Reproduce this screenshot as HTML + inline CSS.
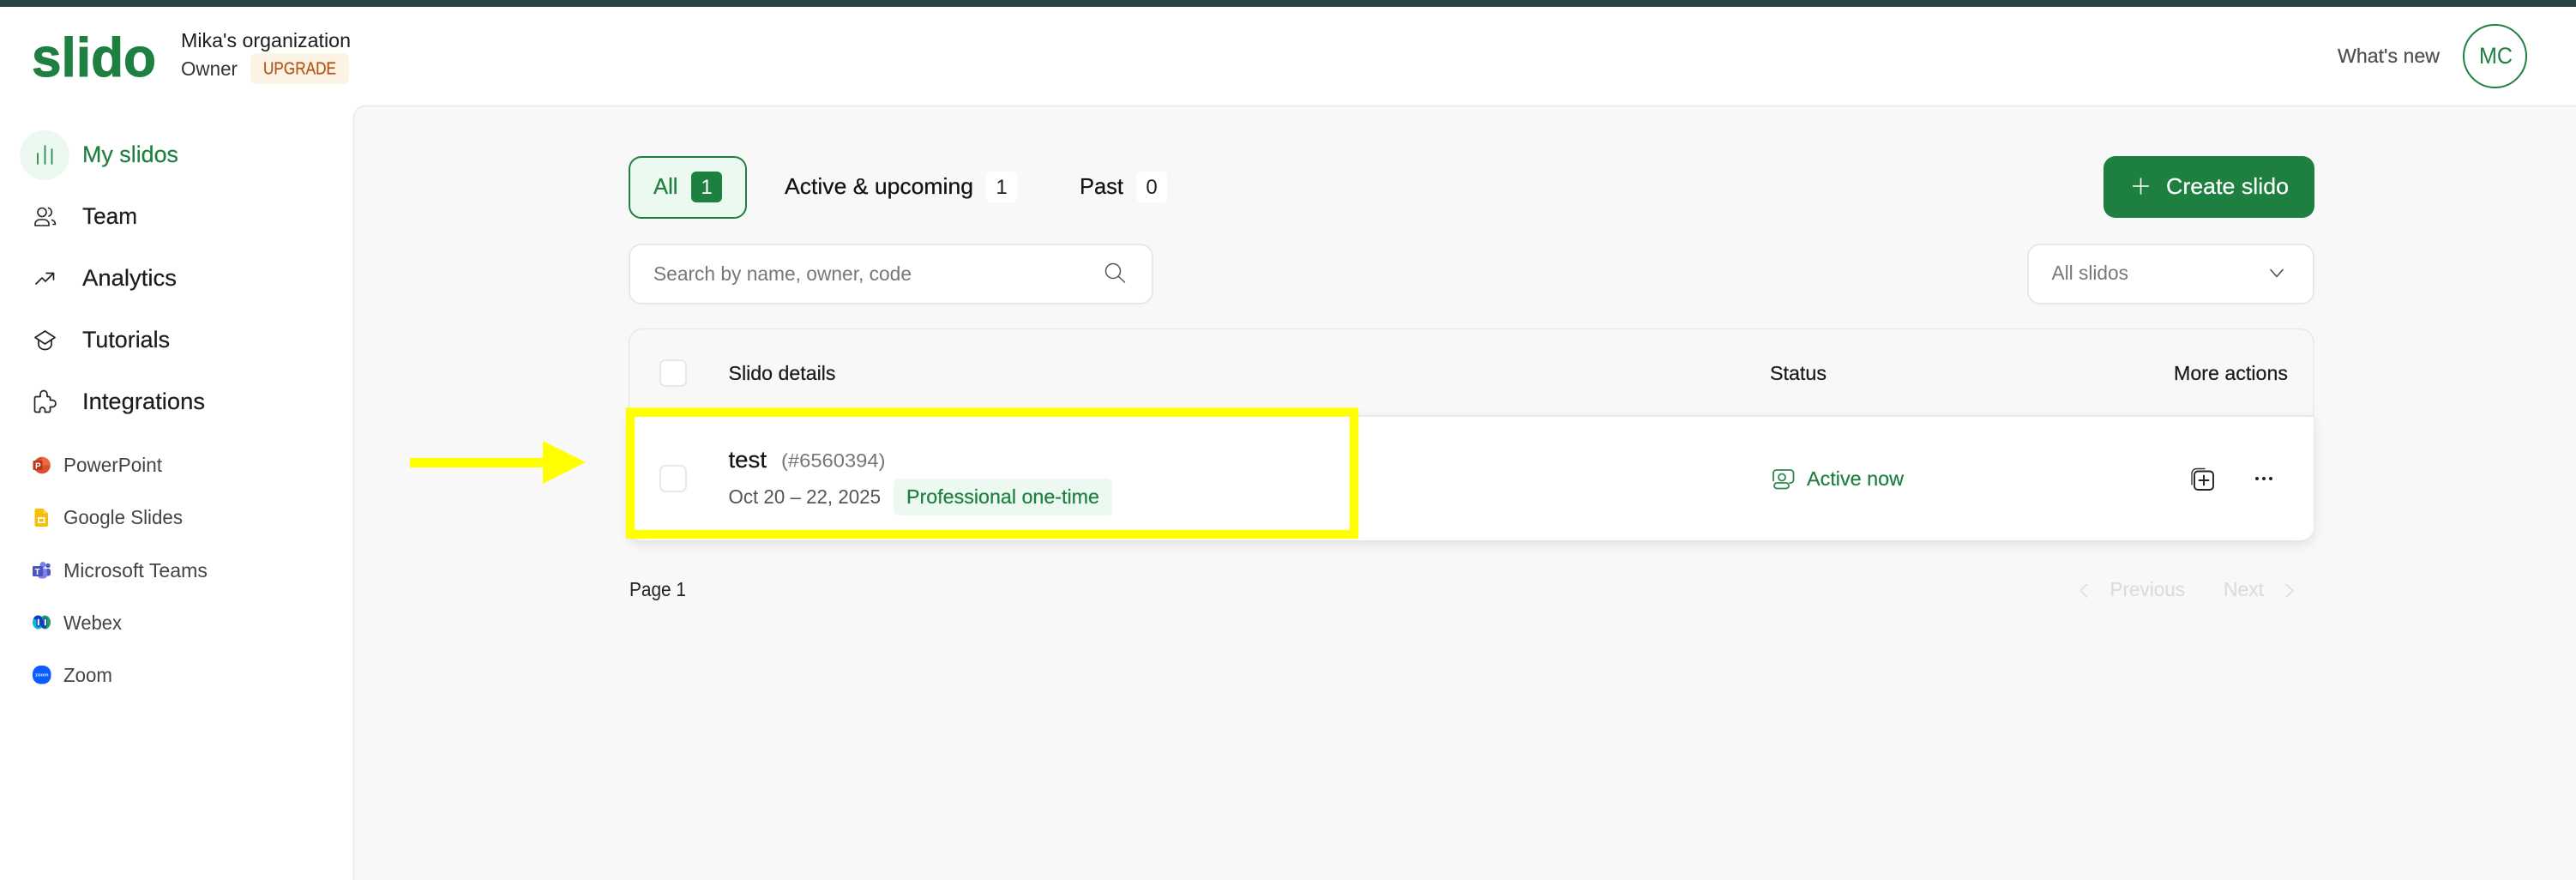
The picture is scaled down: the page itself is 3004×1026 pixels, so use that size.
<!DOCTYPE html>
<html lang="en">
<head>
<meta charset="utf-8">
<title>Slido</title>
<style>
html,body{margin:0;padding:0;background:#fff;width:3004px;height:1026px;overflow:hidden}
svg{display:block}
text{font-family:"Liberation Sans",sans-serif;fill:currentColor}
.m{stroke:currentColor;stroke-width:.22}
.i{fill:none;stroke-linecap:round;stroke-linejoin:round}
</style>
</head>
<body>
<svg xmlns="http://www.w3.org/2000/svg" width="3004" height="1026" viewBox="0 0 3004 1026">
<defs>
<filter id="sh" x="-5%" y="-20%" width="110%" height="150%"><feDropShadow dx="0" dy="4" stdDeviation="6" flood-color="#000" flood-opacity=".11"/></filter>
<clipPath id="pg"><rect x="0" y="0" width="3004" height="1026"/></clipPath>
</defs>
<g clip-path="url(#pg)">
<rect x="0" y="0" width="3004" height="8" fill="#2a4441"/>

<!-- main panel -->
<path d="M3004 123.500H426A14 14 0 0 0 412.500 137.500V1026H3004Z" fill="#f8f8f8"/>
<path d="M3004 123.500H426A14 14 0 0 0 412.500 137.500V1026" fill="none" stroke="#ececec" stroke-width="2"/>

<!-- header -->
<text x="37" y="89" font-size="64" font-weight="700" color="#1e8040" stroke="#1e8040" stroke-width="1" textLength="145" lengthAdjust="spacingAndGlyphs">slido</text>
<text x="211" y="55" font-size="23.500" color="#1c1c1c" textLength="198" lengthAdjust="spacingAndGlyphs">Mika's organization</text>
<text x="211" y="88" font-size="23.500" color="#333" textLength="66" lengthAdjust="spacingAndGlyphs">Owner</text>
<rect x="292" y="62" width="115" height="36" rx="7" fill="#fdf3e4"/>
<text class="m" x="307" y="86.500" font-size="20" color="#b0561a" textLength="85" lengthAdjust="spacingAndGlyphs">UPGRADE</text>
<text x="2726" y="73" font-size="23.500" color="#505050" class="m" textLength="119" lengthAdjust="spacingAndGlyphs">What's new</text>
<circle cx="2909.500" cy="65.500" r="36.500" fill="#fff" stroke="#1e8040" stroke-width="2"/>
<text x="2891" y="74" font-size="27" color="#1e8040" textLength="39" lengthAdjust="spacingAndGlyphs">MC</text>

<!-- nav -->
<circle cx="52" cy="181" r="29" fill="#ecf9f1"/>
<g class="i" stroke="#2a8a4c" stroke-width="1.800"><path d="M44 179V191M52.500 170V191M60.500 174V191"/></g>
<text class="m" x="96" y="189" font-size="27" color="#1e8040" textLength="112" lengthAdjust="spacingAndGlyphs">My slidos</text>

<g class="i" stroke="#222" stroke-width="1.600">
<circle cx="49" cy="247.500" r="5"/>
<path d="M41 263V260.500A5.500 5.500 0 0 1 46.500 256H51.500A5.500 5.500 0 0 1 57 260.500V263Z"/>
<path d="M56.500 242.500A5 5 0 0 1 57 252"/>
<path d="M60.500 256.500A5 5 0 0 1 64.500 261.500H62"/>
</g>
<text class="m" x="96" y="261" font-size="27" color="#1c1c1c" textLength="64" lengthAdjust="spacingAndGlyphs">Team</text>

<g class="i" stroke="#222" stroke-width="1.700"><path d="M42 331L49 324L53 328L62 319M54 318.500H62.500V326"/></g>
<text class="m" x="96" y="333" font-size="27" color="#1c1c1c" textLength="110" lengthAdjust="spacingAndGlyphs">Analytics</text>

<g class="i" stroke="#222" stroke-width="1.700"><path d="M52.500 386L64 393.500L52.500 401L41 393.500Z"/><path d="M45 396.500V401.500A7.500 6 0 0 0 60 401.500V396.500"/></g>
<text class="m" x="96" y="405" font-size="27" color="#1c1c1c" textLength="102" lengthAdjust="spacingAndGlyphs">Tutorials</text>

<g class="i" stroke="#222" stroke-width="1.700"><path d="M40.500 464V479A1.500 1.500 0 0 0 42 480.500H46.500V478A3 3 0 0 1 52.500 478V480.500H57A1.500 1.500 0 0 0 58.500 479V474.500H61A4 4 0 0 0 61 466.500H58.500V464A1.500 1.500 0 0 0 57 462.500H55V459.500A4 4 0 0 0 47 459.500V462.500H42A1.500 1.500 0 0 0 40.500 464Z"/></g>
<text class="m" x="96" y="477" font-size="27" color="#1c1c1c" textLength="143" lengthAdjust="spacingAndGlyphs">Integrations</text>

<!-- integrations -->
<circle cx="49" cy="542.500" r="9.800" fill="#d9502b"/>
<path d="M49 532.700A9.800 9.800 0 0 1 58.800 542.500H49Z" fill="#f0693c"/>
<rect x="38.500" y="537" width="11" height="11" rx="1.200" fill="#b5361a"/>
<text x="41" y="546.500" font-size="10" font-weight="700" style="fill:#fff">P</text>
<text x="74" y="550" font-size="23" color="#444" textLength="115" lengthAdjust="spacingAndGlyphs">PowerPoint</text>

<path d="M42.500 593H50.500L56 598.500V612A2 2 0 0 1 54 614H42.500A2 2 0 0 1 40.500 612V595A2 2 0 0 1 42.500 593Z" fill="#fbbc04"/>
<path d="M50.500 593V598.500H56Z" fill="#fdd663"/>
<path fill-rule="evenodd" d="M44 603H52.500V610H44ZM45.800 604.800V608.200H50.700V604.800Z" fill="#fff"/>
<text x="74" y="611" font-size="23" color="#444" textLength="139" lengthAdjust="spacingAndGlyphs">Google Slides</text>

<circle cx="56" cy="659.500" r="2.700" fill="#5059c9"/>
<rect x="53" y="663" width="6" height="8.500" rx="2.500" fill="#5059c9"/>
<circle cx="50" cy="658.500" r="3.500" fill="#7b83eb"/>
<rect x="44" y="662.500" width="11" height="12" rx="4" fill="#7b83eb"/>
<rect x="38" y="660" width="12" height="12" rx="1.200" fill="#4b53bc"/>
<text x="40.500" y="670" font-size="10" font-weight="700" style="fill:#fff">T</text>
<text x="74" y="673" font-size="23" color="#444" textLength="168" lengthAdjust="spacingAndGlyphs">Microsoft Teams</text>

<ellipse cx="44.500" cy="725.500" rx="6.500" ry="8" fill="#0bb5d8"/>
<ellipse cx="52.500" cy="725.500" rx="6.500" ry="8" fill="#1fa55a"/>
<path d="M39 722C40 717 46 716 49 720V727C47 724 42 722 39 722Z" fill="#0a3dc8"/>
<path d="M49 720C50 724 51 731 55 731C51 734 47 731 47 727Z" fill="#0a3dc8"/>
<rect x="42.500" y="720" width="4.500" height="11" rx="2.200" fill="#0a3dc8"/>
<rect x="50.500" y="720" width="4.500" height="11" rx="2.200" fill="#0a3dc8"/>
<rect x="43.800" y="721.500" width="2" height="8" rx="1" fill="#fff"/>
<rect x="51.800" y="721.500" width="2" height="8" rx="1" fill="#fff"/>
<text x="74" y="734" font-size="23" color="#444" textLength="68" lengthAdjust="spacingAndGlyphs">Webex</text>

<rect x="38" y="776" width="21.500" height="21.500" rx="9.500" fill="#0b5cff"/>
<text x="41" y="788.500" font-size="5.500" font-weight="700" style="fill:#dfe9ff" textLength="15.500" lengthAdjust="spacingAndGlyphs">zoom</text>
<text x="74" y="795" font-size="23" color="#444" textLength="57" lengthAdjust="spacingAndGlyphs">Zoom</text>

<!-- tabs -->
<rect x="734" y="183" width="136" height="71" rx="14" fill="#ecf9f1" stroke="#1e8040" stroke-width="2"/>
<text class="m" x="762" y="226" font-size="26" color="#1e8040" textLength="28.500" lengthAdjust="spacingAndGlyphs">All</text>
<rect x="806" y="200" width="36" height="36" rx="6" fill="#1e8040"/>
<text x="824" y="226" font-size="24" text-anchor="middle" style="fill:#fff">1</text>

<text class="m" x="915" y="226" font-size="26" color="#111" textLength="220" lengthAdjust="spacingAndGlyphs">Active &amp; upcoming</text>
<rect x="1150" y="200" width="36" height="36" rx="6" fill="#fff"/>
<text x="1168" y="226" font-size="24" text-anchor="middle" color="#222">1</text>
<text class="m" x="1259" y="226" font-size="26" color="#111" textLength="51" lengthAdjust="spacingAndGlyphs">Past</text>
<rect x="1325" y="200" width="36" height="36" rx="6" fill="#fff"/>
<text x="1343" y="226" font-size="24" text-anchor="middle" color="#222">0</text>

<!-- create -->
<rect x="2453" y="182" width="246" height="72" rx="14" fill="#1e8040"/>
<path d="M2487 217H2506M2496.500 207.500V226.500" stroke="#fff" stroke-width="1.600" fill="none"/>
<text class="m" x="2526" y="226" font-size="26" color="#fff" textLength="143" lengthAdjust="spacingAndGlyphs">Create slido</text>

<!-- search -->
<rect x="734" y="285" width="610" height="69" rx="14" fill="#fff" stroke="#e8e8e8" stroke-width="2"/>
<text x="762" y="327" font-size="23" color="#777" textLength="301" lengthAdjust="spacingAndGlyphs">Search by name, owner, code</text>
<g class="i" stroke="#555" stroke-width="1.500"><circle cx="1298" cy="316" r="8.500"/><path d="M1304.500 322.500L1311.500 329"/></g>

<!-- select -->
<rect x="2365" y="285" width="333" height="69" rx="14" fill="#fff" stroke="#e8e8e8" stroke-width="2"/>
<text x="2392.500" y="326" font-size="23" color="#777" textLength="89.500" lengthAdjust="spacingAndGlyphs">All slidos</text>
<path class="i" d="M2648 314.500L2655 322.500L2662 314.500" stroke="#555" stroke-width="1.700"/>

<!-- table -->
<rect x="733.500" y="383.500" width="1964.500" height="120" rx="16" fill="#f8f8f8" stroke="#e8e8e8" stroke-width="1.500"/>
<path d="M733 485H2698V614A16 16 0 0 1 2682 630H749A16 16 0 0 1 733 614Z" fill="#fff" filter="url(#sh)"/>
<path d="M733 485H2698" stroke="#e8e8e8" stroke-width="2"/>

<rect x="770" y="420" width="30" height="30" rx="6" fill="#fff" stroke="#e8e8e8" stroke-width="2"/>
<text class="m" x="849.500" y="443" font-size="23" color="#1a1a1a" textLength="125" lengthAdjust="spacingAndGlyphs">Slido details</text>
<text class="m" x="2064" y="443" font-size="23" color="#1a1a1a" textLength="66" lengthAdjust="spacingAndGlyphs">Status</text>
<text class="m" x="2535" y="443" font-size="23" color="#1a1a1a" textLength="133" lengthAdjust="spacingAndGlyphs">More actions</text>

<!-- row -->
<rect x="770" y="543" width="30" height="30" rx="6" fill="#fff" stroke="#e8e8e8" stroke-width="2"/>
<text class="m" x="849.500" y="545" font-size="27" color="#111" textLength="44.500" lengthAdjust="spacingAndGlyphs">test</text>
<text x="911" y="544.500" font-size="22.500" color="#777" textLength="121.500" lengthAdjust="spacingAndGlyphs">(#6560394)</text>
<text x="849.500" y="587" font-size="23" color="#555" textLength="177.500" lengthAdjust="spacingAndGlyphs">Oct 20 – 22, 2025</text>
<rect x="1042" y="558" width="255" height="43" rx="6" fill="#ecf9f1"/>
<text class="m" x="1057" y="587" font-size="23" color="#1e8040" textLength="225" lengthAdjust="spacingAndGlyphs">Professional one-time</text>

<g class="i" stroke="#2a8a4c" stroke-width="1.800">
<path d="M2068 560.500V551.500A3.500 3.500 0 0 1 2071.500 548H2088A3.500 3.500 0 0 1 2091.500 551.500V559.500A3.500 3.500 0 0 1 2088 563H2087"/>
<circle cx="2078" cy="556.500" r="4"/>
<rect x="2069" y="563" width="17" height="6.500" rx="3.200"/>
</g>
<text class="m" x="2107" y="566" font-size="23" color="#1e8040" textLength="113" lengthAdjust="spacingAndGlyphs">Active now</text>

<g class="i" stroke="#222" stroke-width="1.900">
<rect x="2559" y="549.500" width="22" height="21.500" rx="4"/>
<path d="M2570 554.500V565.500M2564.500 560H2575.500"/>
</g>
<path class="i" d="M2556 565V552A5.500 5.500 0 0 1 2561.500 546.500H2571" stroke="#333" stroke-width="1.400"/>
<circle cx="2632" cy="558" r="2" fill="#222"/><circle cx="2640" cy="558" r="2" fill="#222"/><circle cx="2648" cy="558" r="2" fill="#222"/>

<!-- pagination -->
<text x="734" y="695" font-size="23" color="#222" textLength="66" lengthAdjust="spacingAndGlyphs">Page 1</text>
<path class="i" d="M2433.500 681.500L2426 688.500L2433.500 696" stroke="#dedede" stroke-width="1.700"/>
<text class="m" x="2460.500" y="695" font-size="23" color="#dcdcdc" textLength="87.500" lengthAdjust="spacingAndGlyphs">Previous</text>
<text class="m" x="2593" y="695" font-size="23" color="#dcdcdc" textLength="47" lengthAdjust="spacingAndGlyphs">Next</text>
<path class="i" d="M2666 681.500L2674 688.500L2666 696" stroke="#dedede" stroke-width="1.700"/>

<!-- yellow annotation -->
<rect x="735" y="480.500" width="844" height="142.500" fill="none" stroke="#ffff00" stroke-width="10.500"/>
<rect x="478" y="534" width="156" height="11" fill="#ffff00"/>
<path d="M633 514L683 539L633 564Z" fill="#ffff00"/>
</g>
</svg>
</body>
</html>
